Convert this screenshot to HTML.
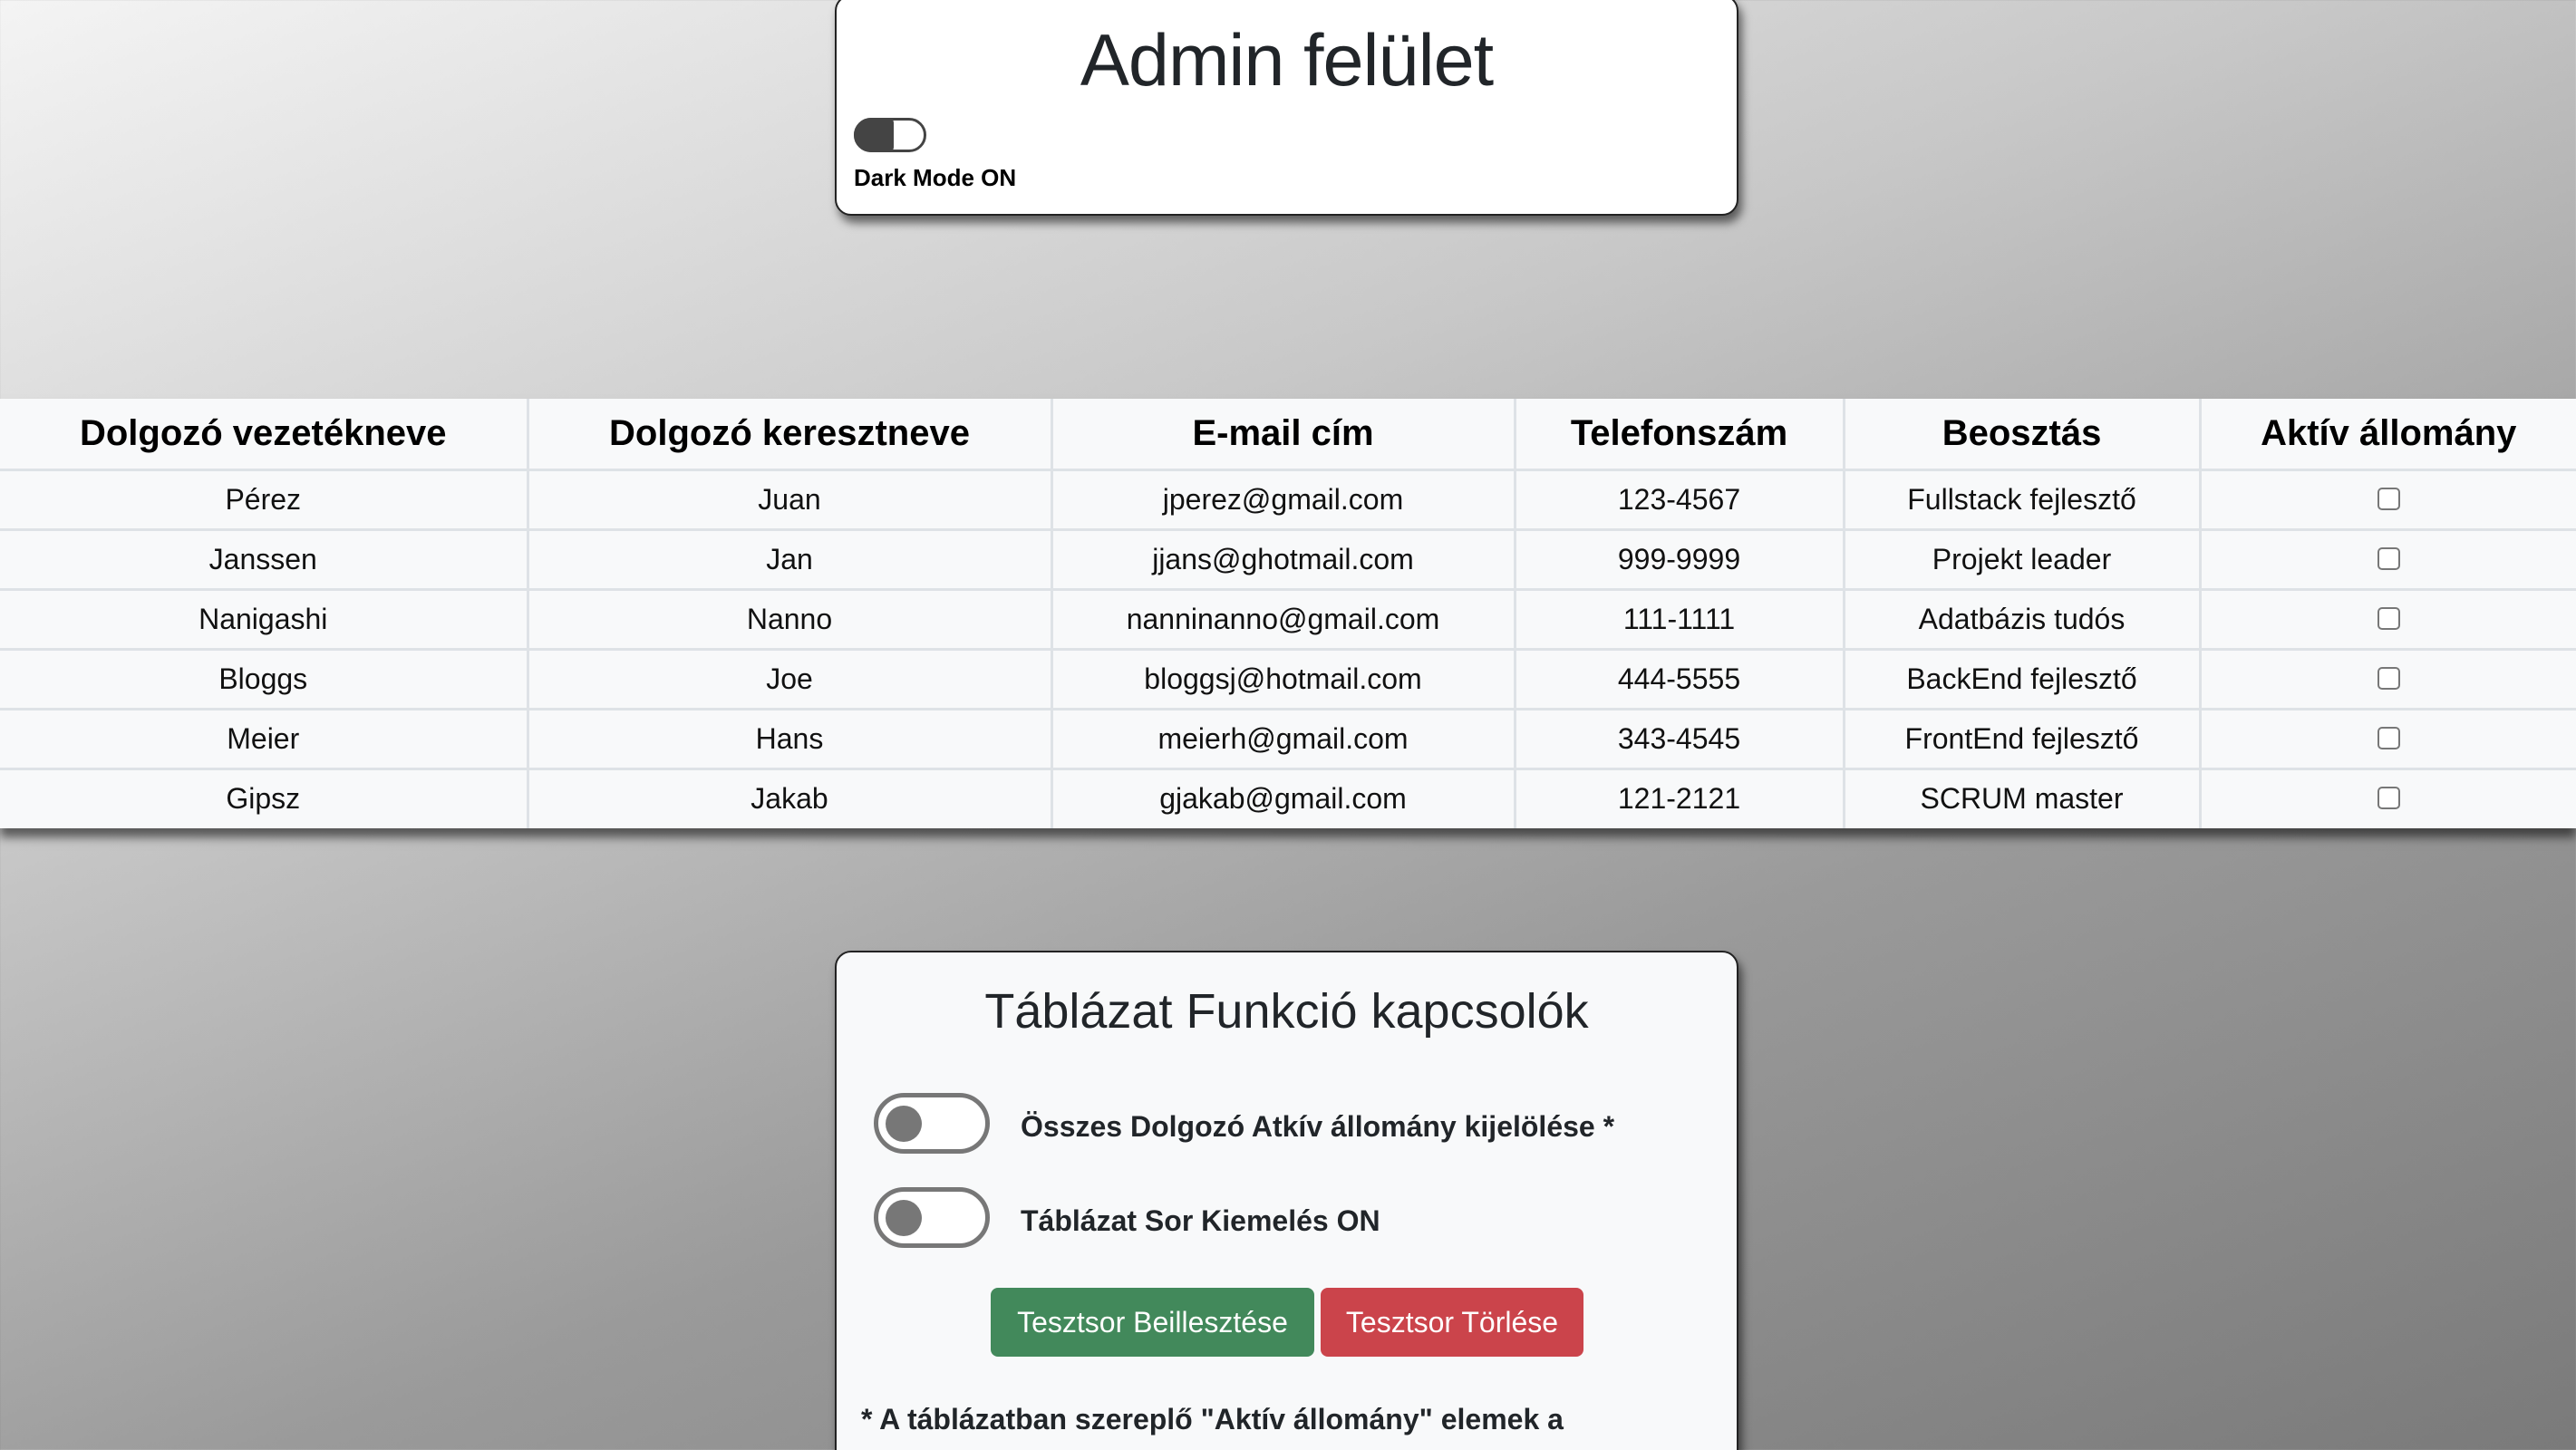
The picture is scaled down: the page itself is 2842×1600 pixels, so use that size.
<!DOCTYPE html>
<html><head><meta charset="utf-8">
<style>
*{box-sizing:border-box;margin:0;padding:0}
html,body{width:2842px;height:1600px;overflow:hidden}
body{font-family:"Liberation Sans",sans-serif;color:#212529;position:relative;
background:linear-gradient(160deg,#f4f4f4 0%,#c8c8c8 35%,#9a9a9a 65%,#7a7a7a 100%);}
.card{position:absolute;left:921px;width:997px;border:2px solid #222;border-radius:18px;
box-shadow:4px 8px 10px rgba(0,0,0,.55);}
.top{top:-6px;height:244px;background:#fff}
.top h1{position:absolute;left:0;right:0;top:25px;text-align:center;font-weight:400;font-size:81px;letter-spacing:-1px}
.sw{position:absolute;left:19px;top:134px;width:80px;height:38px;border:3px solid #444;border-radius:20px;background:#fff}
.sw::before{content:"";position:absolute;left:-3px;top:-3px;width:44px;height:38px;border-radius:20px 6px 6px 20px;background:#444}
.top .lbl{position:absolute;left:19px;top:185px;font-weight:700;font-size:26px;color:#000}
table{position:absolute;left:0;top:440px;width:2842px;border-collapse:collapse;background:#f8f9fa;
box-shadow:0 10px 10px rgba(0,0,0,.55);}
td,th{border:3px solid #dee2e6;text-align:center;font-size:32px;height:66px;color:#111}
th{height:78px;font-size:40px;font-weight:700;color:#000}
tr td:first-child,tr th:first-child{border-left:none}
tr td:last-child,tr th:last-child{border-right:none}
tr:first-child th{border-top:none}
tr:last-child td{border-bottom:none}
.cb{display:inline-block;width:25px;height:25px;border:2px solid #777;border-radius:5px;background:#fff;vertical-align:middle;position:relative;top:-3px}
.bot{top:1049px;height:600px;background:#f8f9fa}
.bot h2{position:absolute;left:0;right:0;top:34px;text-align:center;font-weight:500;font-size:54px}
.tg{position:absolute;left:41px;width:128px;height:67px;border:5px solid #777;border-radius:34px;background:#fff}
.tg::before{content:"";position:absolute;left:8px;top:9px;width:40px;height:40px;border-radius:50%;background:#777}
.tl{position:absolute;left:203px;font-weight:700;font-size:32px}
.btn{position:absolute;top:370px;height:76px;border-radius:8px;color:#fff;font-size:32px;line-height:76px;text-align:center}
.note{position:absolute;left:27px;top:497px;font-weight:700;font-size:32px}
</style></head><body>
<div class="card top">
<h1>Admin felület</h1>
<div class="sw"></div>
<div class="lbl">Dark Mode ON</div>
</div>
<table>
<colgroup><col style="width:582px"><col style="width:578px"><col style="width:511px"><col style="width:363px"><col style="width:393px"><col style="width:415px"></colgroup>
<tr><th>Dolgozó vezetékneve</th><th>Dolgozó keresztneve</th><th>E-mail cím</th><th>Telefonszám</th><th>Beosztás</th><th>Aktív állomány</th></tr>
<tr><td>Pérez</td><td>Juan</td><td>jperez@gmail.com</td><td>123-4567</td><td>Fullstack fejlesztő</td><td><span class="cb"></span></td></tr>
<tr><td>Janssen</td><td>Jan</td><td>jjans@ghotmail.com</td><td>999-9999</td><td>Projekt leader</td><td><span class="cb"></span></td></tr>
<tr><td>Nanigashi</td><td>Nanno</td><td>nanninanno@gmail.com</td><td>111-1111</td><td>Adatbázis tudós</td><td><span class="cb"></span></td></tr>
<tr><td>Bloggs</td><td>Joe</td><td>bloggsj@hotmail.com</td><td>444-5555</td><td>BackEnd fejlesztő</td><td><span class="cb"></span></td></tr>
<tr><td>Meier</td><td>Hans</td><td>meierh@gmail.com</td><td>343-4545</td><td>FrontEnd fejlesztő</td><td><span class="cb"></span></td></tr>
<tr><td>Gipsz</td><td>Jakab</td><td>gjakab@gmail.com</td><td>121-2121</td><td>SCRUM master</td><td><span class="cb"></span></td></tr>
</table>
<div class="card bot">
<h2>Táblázat Funkció kapcsolók</h2>
<div class="tg" style="top:155px"></div>
<div class="tl" style="top:174px">Összes Dolgozó Atkív állomány kijelölése *</div>
<div class="tg" style="top:259px"></div>
<div class="tl" style="top:278px">Táblázat Sor Kiemelés ON</div>
<div class="btn" style="left:170px;width:357px;background:#42895b">Tesztsor Beillesztése</div>
<div class="btn" style="left:534px;width:290px;background:#cb444b">Tesztsor Törlése</div>
<div class="note">* A táblázatban szereplő "Aktív állomány" elemek a</div>
</div>
</body></html>
